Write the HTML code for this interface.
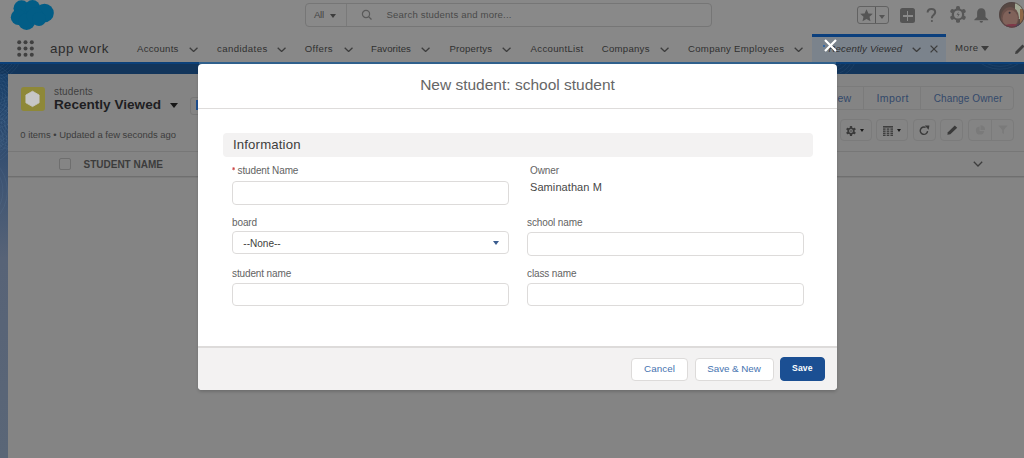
<!DOCTYPE html>
<html><head><meta charset="utf-8">
<style>
*{box-sizing:border-box;margin:0;padding:0}
html,body{width:1024px;height:458px;overflow:hidden}
body{position:relative;background:#848484;font-family:"Liberation Sans",sans-serif;color:#333}
.a{position:absolute;white-space:nowrap}
#hdr{left:0;top:0;width:1024px;height:62px;background:#888888}
#line{left:0;top:62px;width:1024px;height:2px;background:#0b4079}
#band{left:0;top:64px;width:1024px;height:10px;background:#12355b}
#strip{left:0;top:74px;width:8px;height:384px;background:linear-gradient(#163a62,#4a5b72 40%,#5a6676)}
#card{left:8px;top:74px;width:1030px;height:400px;background:#848484;border-radius:4px}
.nav{top:43px;font-size:9.6px;color:#303030}
.chev{position:absolute;top:46.6px;width:9.2px;height:5.4px;fill:none;stroke:#3d3d3d;stroke-width:1.3}
#modal{left:198px;top:64px;width:639px;height:326px;background:#fff;border-radius:4px;box-shadow:0 2px 3px rgba(0,0,0,.16);overflow:hidden}
#mhead{left:0;top:0;width:639px;height:44.8px;border-bottom:1.8px solid #dedcdb}
#mtitle{left:0;top:12.4px;width:639px;text-align:center;font-size:15.5px;color:#666;letter-spacing:0}
#sect{left:25px;top:69px;width:590px;height:24px;background:#f3f2f2;border-radius:4px}
.lbl{font-size:10px;letter-spacing:-.12px;color:#636363}
.inp{position:absolute;height:24px;border:1px solid #dddbda;border-radius:4px;background:#fff}
#mfoot{left:0;top:282px;width:639px;height:44px;background:#f3f2f2;border-top:2px solid #dddbda}
.btn{position:absolute;height:23.4px;border:1px solid #dddbda;border-radius:4px;background:#fff;font-size:9.8px;letter-spacing:.1px;color:#4673b0;text-align:center;line-height:20.6px}
</style></head><body>
<div class="a" id="hdr"></div>
<div class="a" id="line"></div>
<svg class="a" style="left:0;top:64px" width="1024" height="394" viewBox="0 64 1024 394"><defs><linearGradient id="sg" x1="0" y1="0" x2="0" y2="1"><stop offset="0" stop-color="#173e68"/><stop offset=".25" stop-color="#3a5272"/><stop offset=".48" stop-color="#576377"/><stop offset="1" stop-color="#5a6677"/></linearGradient><clipPath id="bc"><rect x="0" y="64" width="1024" height="10"/><rect x="0" y="64" width="8" height="394"/></clipPath><clipPath id="bc2"><rect x="0" y="64" width="1024" height="10"/><rect x="0" y="64" width="8" height="150"/></clipPath></defs><g clip-path="url(#bc)"><rect x="0" y="64" width="1024" height="394" fill="#12355b"/><rect x="0" y="74" width="8" height="384" fill="url(#sg)"/><g clip-path="url(#bc2)" fill="none" stroke="#7597bb" stroke-opacity=".2" stroke-width=".6"><circle cx="-8" cy="50" r="10.0"/><circle cx="-8" cy="50" r="12.9"/><circle cx="-8" cy="50" r="15.7"/><circle cx="-8" cy="50" r="18.6"/><circle cx="-8" cy="50" r="21.5"/><circle cx="-8" cy="50" r="24.4"/><circle cx="-8" cy="50" r="27.2"/><circle cx="-8" cy="50" r="30.1"/><circle cx="14" cy="123" r="3.9"/><circle cx="14" cy="123" r="6.8"/><circle cx="14" cy="123" r="9.7"/><circle cx="14" cy="123" r="12.5"/><circle cx="14" cy="123" r="15.4"/><circle cx="14" cy="123" r="18.3"/><circle cx="14" cy="123" r="21.2"/><circle cx="14" cy="123" r="24.0"/><circle cx="14" cy="123" r="26.9"/><circle cx="68" cy="123" r="9.9"/><circle cx="68" cy="123" r="12.5"/><circle cx="68" cy="123" r="15.1"/><circle cx="68" cy="123" r="17.7"/><circle cx="68" cy="123" r="20.3"/><circle cx="68" cy="123" r="22.9"/><circle cx="114" cy="25" r="10.0"/><circle cx="114" cy="25" r="13.9"/><circle cx="114" cy="25" r="17.8"/><circle cx="114" cy="25" r="21.8"/><circle cx="114" cy="25" r="25.7"/><circle cx="114" cy="25" r="29.7"/><circle cx="143" cy="33" r="11.5"/><circle cx="143" cy="33" r="15.0"/><circle cx="143" cy="33" r="18.5"/><circle cx="143" cy="33" r="22.1"/><circle cx="143" cy="33" r="25.6"/><circle cx="143" cy="33" r="29.1"/><circle cx="211" cy="32" r="5.4"/><circle cx="211" cy="32" r="8.4"/><circle cx="211" cy="32" r="11.4"/><circle cx="211" cy="32" r="14.4"/><circle cx="211" cy="32" r="17.4"/><circle cx="211" cy="32" r="20.4"/><circle cx="255" cy="44" r="6.2"/><circle cx="255" cy="44" r="9.2"/><circle cx="255" cy="44" r="12.1"/><circle cx="255" cy="44" r="15.1"/><circle cx="255" cy="44" r="18.0"/><circle cx="255" cy="44" r="21.0"/><circle cx="255" cy="44" r="24.0"/><circle cx="295" cy="89" r="11.5"/><circle cx="295" cy="89" r="14.6"/><circle cx="295" cy="89" r="17.6"/><circle cx="295" cy="89" r="20.7"/><circle cx="295" cy="89" r="23.7"/><circle cx="342" cy="37" r="3.4"/><circle cx="342" cy="37" r="6.2"/><circle cx="342" cy="37" r="9.0"/><circle cx="342" cy="37" r="11.7"/><circle cx="342" cy="37" r="14.5"/><circle cx="342" cy="37" r="17.3"/><circle cx="342" cy="37" r="20.0"/><circle cx="342" cy="37" r="22.8"/><circle cx="389" cy="126" r="7.6"/><circle cx="389" cy="126" r="11.5"/><circle cx="389" cy="126" r="15.3"/><circle cx="389" cy="126" r="19.1"/><circle cx="389" cy="126" r="23.0"/><circle cx="389" cy="126" r="26.8"/><circle cx="389" cy="126" r="30.6"/><circle cx="431" cy="119" r="3.3"/><circle cx="431" cy="119" r="7.2"/><circle cx="431" cy="119" r="11.2"/><circle cx="431" cy="119" r="15.1"/><circle cx="431" cy="119" r="19.0"/><circle cx="431" cy="119" r="22.9"/><circle cx="431" cy="119" r="26.8"/><circle cx="461" cy="126" r="11.3"/><circle cx="461" cy="126" r="14.6"/><circle cx="461" cy="126" r="18.0"/><circle cx="461" cy="126" r="21.3"/><circle cx="461" cy="126" r="24.6"/><circle cx="461" cy="126" r="27.9"/><circle cx="461" cy="126" r="31.2"/><circle cx="498" cy="27" r="12.0"/><circle cx="498" cy="27" r="14.7"/><circle cx="498" cy="27" r="17.5"/><circle cx="498" cy="27" r="20.2"/><circle cx="498" cy="27" r="22.9"/><circle cx="498" cy="27" r="25.7"/><circle cx="498" cy="27" r="28.4"/><circle cx="542" cy="41" r="6.1"/><circle cx="542" cy="41" r="9.0"/><circle cx="542" cy="41" r="11.8"/><circle cx="542" cy="41" r="14.7"/><circle cx="542" cy="41" r="17.6"/><circle cx="542" cy="41" r="20.5"/><circle cx="542" cy="41" r="23.3"/><circle cx="542" cy="41" r="26.2"/><circle cx="542" cy="41" r="29.1"/><circle cx="572" cy="112" r="10.5"/><circle cx="572" cy="112" r="13.2"/><circle cx="572" cy="112" r="15.9"/><circle cx="572" cy="112" r="18.6"/><circle cx="572" cy="112" r="21.3"/><circle cx="572" cy="112" r="24.0"/><circle cx="572" cy="112" r="26.7"/><circle cx="636" cy="45" r="6.9"/><circle cx="636" cy="45" r="9.6"/><circle cx="636" cy="45" r="12.4"/><circle cx="636" cy="45" r="15.1"/><circle cx="636" cy="45" r="17.8"/><circle cx="636" cy="45" r="20.5"/><circle cx="674" cy="38" r="7.1"/><circle cx="674" cy="38" r="10.3"/><circle cx="674" cy="38" r="13.5"/><circle cx="674" cy="38" r="16.8"/><circle cx="674" cy="38" r="20.0"/><circle cx="674" cy="38" r="23.2"/><circle cx="674" cy="38" r="26.5"/><circle cx="674" cy="38" r="29.7"/><circle cx="674" cy="38" r="32.9"/><circle cx="726" cy="32" r="6.4"/><circle cx="726" cy="32" r="10.4"/><circle cx="726" cy="32" r="14.4"/><circle cx="726" cy="32" r="18.3"/><circle cx="726" cy="32" r="22.3"/><circle cx="783" cy="40" r="5.5"/><circle cx="783" cy="40" r="9.1"/><circle cx="783" cy="40" r="12.8"/><circle cx="783" cy="40" r="16.5"/><circle cx="783" cy="40" r="20.1"/><circle cx="783" cy="40" r="23.8"/><circle cx="783" cy="40" r="27.5"/><circle cx="783" cy="40" r="31.2"/><circle cx="830" cy="51" r="6.3"/><circle cx="830" cy="51" r="9.8"/><circle cx="830" cy="51" r="13.4"/><circle cx="830" cy="51" r="16.9"/><circle cx="830" cy="51" r="20.5"/><circle cx="830" cy="51" r="24.1"/><circle cx="830" cy="51" r="27.6"/><circle cx="869" cy="115" r="8.8"/><circle cx="869" cy="115" r="12.2"/><circle cx="869" cy="115" r="15.6"/><circle cx="869" cy="115" r="19.0"/><circle cx="869" cy="115" r="22.3"/><circle cx="869" cy="115" r="25.7"/><circle cx="869" cy="115" r="29.1"/><circle cx="901" cy="114" r="10.4"/><circle cx="901" cy="114" r="13.8"/><circle cx="901" cy="114" r="17.3"/><circle cx="901" cy="114" r="20.8"/><circle cx="901" cy="114" r="24.2"/><circle cx="901" cy="114" r="27.7"/><circle cx="901" cy="114" r="31.2"/><circle cx="947" cy="117" r="11.3"/><circle cx="947" cy="117" r="14.1"/><circle cx="947" cy="117" r="16.8"/><circle cx="947" cy="117" r="19.6"/><circle cx="947" cy="117" r="22.3"/><circle cx="947" cy="117" r="25.1"/><circle cx="947" cy="117" r="27.9"/><circle cx="1000" cy="35" r="11.8"/><circle cx="1000" cy="35" r="14.6"/><circle cx="1000" cy="35" r="17.4"/><circle cx="1000" cy="35" r="20.2"/><circle cx="1000" cy="35" r="23.0"/><circle cx="1000" cy="35" r="25.8"/><circle cx="1000" cy="35" r="28.6"/><circle cx="1000" cy="35" r="31.4"/><circle cx="1000" cy="35" r="34.2"/><circle cx="-6" cy="127" r="11.9"/><circle cx="-6" cy="127" r="15.9"/><circle cx="-6" cy="127" r="19.8"/><circle cx="-6" cy="127" r="23.8"/><circle cx="-33" cy="191" r="9.7"/><circle cx="-33" cy="191" r="14.1"/><circle cx="-33" cy="191" r="18.4"/><circle cx="-33" cy="191" r="22.8"/><circle cx="-33" cy="191" r="27.2"/><circle cx="-33" cy="191" r="31.5"/><circle cx="-33" cy="191" r="35.9"/><circle cx="-33" cy="191" r="40.3"/><circle cx="-28" cy="162" r="11.9"/><circle cx="-28" cy="162" r="14.5"/><circle cx="-28" cy="162" r="17.0"/><circle cx="-28" cy="162" r="19.6"/><circle cx="-28" cy="162" r="22.1"/><circle cx="-28" cy="162" r="24.7"/><circle cx="-34" cy="147" r="6.4"/><circle cx="-34" cy="147" r="10.3"/><circle cx="-34" cy="147" r="14.2"/><circle cx="-34" cy="147" r="18.0"/><circle cx="-34" cy="147" r="21.9"/><circle cx="-15" cy="95" r="14.8"/><circle cx="-15" cy="95" r="17.6"/><circle cx="-15" cy="95" r="20.4"/><circle cx="-15" cy="95" r="23.3"/><circle cx="-15" cy="95" r="26.1"/><circle cx="-15" cy="95" r="28.9"/><circle cx="-15" cy="95" r="31.8"/><circle cx="-4" cy="104" r="9.3"/><circle cx="-4" cy="104" r="12.9"/><circle cx="-4" cy="104" r="16.5"/><circle cx="-4" cy="104" r="20.1"/><circle cx="-4" cy="104" r="23.7"/><circle cx="-23" cy="136" r="4.8"/><circle cx="-23" cy="136" r="7.7"/><circle cx="-23" cy="136" r="10.6"/><circle cx="-23" cy="136" r="13.5"/><circle cx="-23" cy="136" r="16.4"/><circle cx="-23" cy="136" r="19.3"/><circle cx="-23" cy="136" r="22.2"/><circle cx="-23" cy="136" r="25.2"/><circle cx="-11" cy="139" r="8.5"/><circle cx="-11" cy="139" r="11.5"/><circle cx="-11" cy="139" r="14.6"/><circle cx="-11" cy="139" r="17.6"/><circle cx="-11" cy="139" r="20.7"/><circle cx="-11" cy="139" r="23.7"/></g></g></svg>
<div class="a" id="card"></div>

<!-- logo -->
<svg class="a" style="left:10px;top:0" width="45" height="31" viewBox="0 0 45 31">
<g fill="#025d86"><circle cx="11.5" cy="8.3" r="8"/><circle cx="22.5" cy="7.6" r="7.5"/><circle cx="34.5" cy="13" r="9.3"/><circle cx="8.6" cy="17.3" r="7.8"/><circle cx="16.6" cy="21.6" r="8.4"/><circle cx="25" cy="16" r="8.5"/><circle cx="29" cy="19" r="7"/></g></svg>
<!-- search -->
<div class="a" style="left:304.5px;top:3px;width:407.6px;height:23.6px;border:1px solid #767676;border-radius:4px;background:#898989"></div>
<div class="a" style="left:346px;top:4px;width:1px;height:22px;background:#7a7a7a"></div>
<div class="a" style="left:314px;top:9.2px;font-size:9.6px;letter-spacing:-.3px;color:#444">All</div>
<div class="a" style="left:330.2px;top:13.6px;width:0;height:0;border-left:3.6px solid transparent;border-right:3.6px solid transparent;border-top:4.2px solid #3d3d3d"></div>
<svg class="a" style="left:361px;top:8.8px" width="12" height="12" viewBox="0 0 12 12"><circle cx="5" cy="5" r="3.6" fill="none" stroke="#5a5a5a" stroke-width="1.2"/><line x1="7.6" y1="7.6" x2="10.5" y2="10.5" stroke="#5a5a5a" stroke-width="1.3"/></svg>
<div class="a" style="left:386.5px;top:8.7px;font-size:9.6px;letter-spacing:.17px;color:#4a4a4a">Search students and more...</div>

<!-- right icons -->
<div class="a" style="left:857.2px;top:6.1px;width:32.3px;height:18.1px;border:1.2px solid #626262;border-radius:3px"></div>
<div class="a" style="left:874.8px;top:7px;width:1.6px;height:16.4px;background:#585858"></div>
<svg class="a" style="left:860px;top:8.5px" width="13" height="13" viewBox="0 0 13 13"><path d="M6.5 0.3l1.9 4.1 4.4.4-3.3 3 1 4.4-4-2.3-4 2.3 1-4.4-3.3-3 4.4-.4z" fill="#555"/></svg>
<div class="a" style="left:879.2px;top:14.5px;width:0;height:0;border-left:3.2px solid transparent;border-right:3.2px solid transparent;border-top:4.1px solid #555"></div>
<div class="a" style="left:900.3px;top:8.25px;width:14.7px;height:15px;background:#545454;border-radius:2.5px"></div>
<div class="a" style="left:906.9px;top:10.8px;width:1.6px;height:10px;background:#8a8a8a"></div>
<div class="a" style="left:902.7px;top:15px;width:10px;height:1.6px;background:#8a8a8a"></div>
<svg class="a" style="left:926px;top:8px" width="11" height="15" viewBox="0 0 11 15"><path d="M1.6 4.4C1.6 2.2 3.2 1 5.3 1S9.2 2.3 9.2 4.3c0 2.4-3.3 2.8-3.3 5.4v.6" fill="none" stroke="#555" stroke-width="2"/><circle cx="5.9" cy="13" r="1.05" fill="#555"/></svg>
<svg class="a" style="left:949.8px;top:5.9px" width="17" height="17" viewBox="0 0 17 17"><g fill="#585858"><circle cx="8" cy="8.4" r="6.2"/><rect x="6" y="0" width="4" height="16.8" rx="1.6"/><rect x="6" y="0" width="4" height="16.8" rx="1.6" transform="rotate(60 8 8.4)"/><rect x="6" y="0" width="4" height="16.8" rx="1.6" transform="rotate(120 8 8.4)"/></g><circle cx="8" cy="8.4" r="4" fill="#8a8a8a"/><path d="M8.8 5.6L6.6 8.8h1.7l-1 2.6 2.4-3.4H8z" fill="#585858"/></svg>
<svg class="a" style="left:973.5px;top:7.6px" width="15" height="15" viewBox="0 0 15 15"><path d="M7.3 0.3c2.6 0 4.2 1.9 4.2 4.6v4l2.7 2.6v.8H0.4v-.8l2.7-2.6v-4C3.1 2.2 4.7 0.3 7.3 0.3z" fill="#555"/><path d="M5.6 13h3.4a1.7 1.7 0 0 1-3.4 0z" fill="#555"/></svg>
<svg class="a" style="left:998.8px;top:2.3px" width="26" height="26" viewBox="0 0 26 26"><defs><clipPath id="av"><circle cx="12.8" cy="12.8" r="12.7"/></clipPath></defs><g clip-path="url(#av)"><rect width="26" height="26" fill="#574843"/><rect x="16" y="0" width="10" height="17" fill="#a2a894"/><rect x="21" y="7" width="5" height="14" fill="#8e6646"/><ellipse cx="11" cy="15.5" rx="9" ry="10.5" fill="#6a504a"/><ellipse cx="11.2" cy="16.5" rx="7.6" ry="8.4" fill="#80625a"/><ellipse cx="14" cy="26.5" rx="12" ry="4.5" fill="#7e3848"/><ellipse cx="21" cy="25" rx="4" ry="3" fill="#3e4a6e"/><circle cx="10.6" cy="10.8" r="1" fill="#2e2e3a"/></g><circle cx="12.8" cy="12.8" r="12.3" fill="none" stroke="#4e4444" stroke-width=".8"/></svg>

<!-- nav -->
<div class="a" style="left:17px;top:40px;width:17px;height:17px">
<svg width="17" height="17" viewBox="0 0 17 17"><g fill="#404040"><circle cx="2.2" cy="2.2" r="2"/><circle cx="8.5" cy="2.2" r="2"/><circle cx="14.8" cy="2.2" r="2"/><circle cx="2.2" cy="8.5" r="2"/><circle cx="8.5" cy="8.5" r="2"/><circle cx="14.8" cy="8.5" r="2"/><circle cx="2.2" cy="14.8" r="2"/><circle cx="8.5" cy="14.8" r="2"/><circle cx="14.8" cy="14.8" r="2"/></g></svg></div>
<div class="a" style="left:50px;top:41px;font-size:13.4px;letter-spacing:0.6px;color:#2c2c2c">app work</div>
<div class="a nav" style="left:137px;letter-spacing:.28px">Accounts</div><svg class="chev" style="left:188.5px"><polyline points="0.7,0.7 4.6,4.5 8.5,0.7"/></svg>
<div class="a nav" style="left:217px;letter-spacing:.43px">candidates</div><svg class="chev" style="left:276.5px"><polyline points="0.7,0.7 4.6,4.5 8.5,0.7"/></svg>
<div class="a nav" style="left:304.7px;letter-spacing:.4px">Offers</div><svg class="chev" style="left:343.5px"><polyline points="0.7,0.7 4.6,4.5 8.5,0.7"/></svg>
<div class="a nav" style="left:371px;letter-spacing:.05px">Favorites</div><svg class="chev" style="left:421px"><polyline points="0.7,0.7 4.6,4.5 8.5,0.7"/></svg>
<div class="a nav" style="left:449.4px;letter-spacing:.21px">Propertys</div><svg class="chev" style="left:501.8px"><polyline points="0.7,0.7 4.6,4.5 8.5,0.7"/></svg>
<div class="a nav" style="left:530.6px;letter-spacing:.31px">AccountList</div>
<div class="a nav" style="left:601.8px;letter-spacing:.26px">Companys</div><svg class="chev" style="left:660px"><polyline points="0.7,0.7 4.6,4.5 8.5,0.7"/></svg>
<div class="a nav" style="left:688px;letter-spacing:.3px">Company Employees</div><svg class="chev" style="left:793.8px"><polyline points="0.7,0.7 4.6,4.5 8.5,0.7"/></svg>
<div class="a" style="left:812px;top:34px;width:134px;height:28px;background:#7b838c"></div>
<div class="a" style="left:812px;top:33.9px;width:134px;height:2.7px;background:#0b3f7d"></div>
<div class="a" style="left:823px;top:45px;width:2px;height:2px;background:#1f5ea8;border-radius:1px"></div>
<div class="a nav" style="left:828.4px;font-style:italic;letter-spacing:.17px;color:#2e2e2e">Recently Viewed</div>
<svg class="chev" style="left:911.6px"><polyline points="0.7,0.7 4.6,4.5 8.5,0.7"/></svg>
<svg class="a" style="left:929.5px;top:44.8px" width="8" height="8" viewBox="0 0 8 8"><path d="M.6 .6L7.4 7.4M7.4 .6L.6 7.4" stroke="#3d3d3d" stroke-width="1.3"/></svg>
<div class="a nav" style="left:955px;top:42.4px;letter-spacing:.4px">More</div>
<div class="a" style="left:980.5px;top:45.5px;width:0;height:0;border-left:4px solid transparent;border-right:4px solid transparent;border-top:5px solid #3d3d3d"></div>
<svg class="a" style="left:1013.5px;top:43px" width="12" height="12" viewBox="0 0 12 12"><path d="M1 11l.6-2.6L8.5 1.5l2 2-6.9 6.9z" fill="#3f3f3f"/></svg>

<!-- list view header -->
<div class="a" style="left:20.7px;top:86.6px;width:24.3px;height:24.3px;background:#8e8838;border-radius:3px"></div>
<svg class="a" style="left:24.3px;top:90px" width="17" height="18" viewBox="0 0 17 18"><path d="M8.5 1.2l6.6 3.8v7.8L8.5 16.6 1.9 12.8V5z" fill="#c6c6c6" stroke="#c6c6c6" stroke-width="0.8" stroke-linejoin="round"/></svg>
<div class="a" style="left:54px;top:86.2px;font-size:10px;letter-spacing:.15px;color:#404040">students</div>
<div class="a" style="left:54px;top:96.7px;font-size:13.6px;font-weight:bold;color:#1e1e22">Recently Viewed</div>
<div class="a" style="left:169.6px;top:102.5px;width:0;height:0;border-left:4.5px solid transparent;border-right:4.5px solid transparent;border-top:5.5px solid #161616"></div>
<div class="a" style="left:189.7px;top:96.6px;width:14px;height:18px;border:1px solid #777;border-radius:3px"></div><div class="a" style="left:196px;top:100px;width:2px;height:10px;background:#1d4f8f"></div>
<div class="a" style="left:20.3px;top:129.4px;font-size:9.44px;color:#3c3c3c">0 items • Updated a few seconds ago</div>
<div class="a" style="left:8px;top:151px;width:1020px;height:1px;background:#777"></div>
<div class="a" style="left:8px;top:176px;width:1020px;height:1px;background:#6f6f6f"></div><div class="a" style="left:8px;top:177px;width:1020px;height:1px;background:#7b7b7b"></div>
<div class="a" style="left:59px;top:158px;width:12px;height:12px;border:1px solid #6e6e6e;border-radius:2px;background:#858585"></div>
<div class="a" style="left:83.5px;top:159px;font-size:10px;font-weight:bold;color:#3c3c3c;letter-spacing:0">STUDENT NAME</div>
<svg class="chev" style="left:972.8px;top:161px;width:10px;height:6px"><polyline points="0.8,0.8 5,5 9.2,0.8"/></svg>

<!-- list view buttons -->
<div class="a" style="left:800px;top:86.4px;width:214px;height:24px;border:1px solid #7b7b7b;border-radius:4px"></div>
<div class="a" style="left:863px;top:87.4px;width:1px;height:22px;background:#7b7b7b"></div>
<div class="a" style="left:920.2px;top:87.4px;width:1px;height:22px;background:#7b7b7b"></div>
<div class="a" style="left:829.5px;top:92.2px;font-size:10.6px;letter-spacing:.25px;color:#33496b">New</div>
<div class="a" style="left:876.4px;top:92.2px;font-size:10.6px;letter-spacing:.4px;color:#33496b">Import</div>
<div class="a" style="left:933.7px;top:93px;font-size:10px;letter-spacing:.12px;color:#33496b">Change Owner</div>
<div class="a" style="left:839.8px;top:119px;width:32.5px;height:22px;border:1px solid #7b7b7b;border-radius:4px"></div>
<div class="a" style="left:876.3px;top:119px;width:32px;height:22px;border:1px solid #7b7b7b;border-radius:4px"></div>
<div class="a" style="left:912.5px;top:119px;width:23.5px;height:22px;border:1px solid #7b7b7b;border-radius:4px"></div>
<div class="a" style="left:940.4px;top:119px;width:22.6px;height:22px;border:1px solid #7b7b7b;border-radius:4px"></div>
<div class="a" style="left:968px;top:119px;width:46px;height:22px;border:1px solid #7b7b7b;border-radius:4px"></div>
<div class="a" style="left:990.9px;top:119.5px;width:1px;height:21px;background:#7b7b7b"></div>
<svg class="a" style="left:846.3px;top:125.5px" width="10" height="10" viewBox="0 0 10 10"><g fill="#3a3a3a"><circle cx="5" cy="5" r="3.6"/><rect x="3.9" y="0" width="2.2" height="10" rx=".5"/><rect x="3.9" y="0" width="2.2" height="10" rx=".5" transform="rotate(60 5 5)"/><rect x="3.9" y="0" width="2.2" height="10" rx=".5" transform="rotate(120 5 5)"/></g><circle cx="5" cy="5" r="1.9" fill="#858585"/><circle cx="5" cy="5" r=".8" fill="#3a3a3a"/></svg>
<div class="a" style="left:860.4px;top:129px;border-left:2.4px solid transparent;border-right:2.4px solid transparent;border-top:3px solid #1a1a1a"></div>
<svg class="a" style="left:882.9px;top:125.5px" width="10" height="10" viewBox="0 0 10 10"><g fill="#3f3f3f"><rect x="0" y="0" width="10" height="1.6"/><rect x="0" y="2.4" width="2.6" height="1.4"/><rect x="3.7" y="2.4" width="2.6" height="1.4"/><rect x="7.4" y="2.4" width="2.6" height="1.4"/><rect x="0" y="4.5" width="2.6" height="1.4"/><rect x="3.7" y="4.5" width="2.6" height="1.4"/><rect x="7.4" y="4.5" width="2.6" height="1.4"/><rect x="0" y="6.6" width="2.6" height="1.4"/><rect x="3.7" y="6.6" width="2.6" height="1.4"/><rect x="7.4" y="6.6" width="2.6" height="1.4"/><rect x="0" y="8.6" width="2.6" height="1.4"/><rect x="3.7" y="8.6" width="2.6" height="1.4"/><rect x="7.4" y="8.6" width="2.6" height="1.4"/></g></svg>
<div class="a" style="left:897px;top:129px;border-left:2.4px solid transparent;border-right:2.4px solid transparent;border-top:3px solid #1a1a1a"></div>
<svg class="a" style="left:919px;top:124.5px" width="11" height="11" viewBox="0 0 11 11"><path d="M8.6 6.2A3.7 3.7 0 1 1 6.6 2.4" fill="none" stroke="#3a3a3a" stroke-width="1.4"/><path d="M5.8 0.6L10.4 0.4 9.6 4.8z" fill="#3a3a3a"/></svg>
<svg class="a" style="left:946.5px;top:124.8px" width="11" height="10" viewBox="0 0 11 10"><path d="M0.3 9.7l.6-2.5L7.8 0.6l2.4 2.2-6.9 6.4z" fill="#3a3a3a"/></svg>
<svg class="a" style="left:974.5px;top:124.7px" width="10.5" height="10.5" viewBox="0 0 12 12"><path d="M5.2 1.6A4.7 4.7 0 1 0 10.4 6.8H5.2z" fill="#7a7a7a"/><path d="M6.3 0.3v5.3h5.4A5.4 5.4 0 0 0 6.3 0.3z" fill="#7a7a7a"/></svg>
<svg class="a" style="left:997.8px;top:125px" width="10" height="9.5" viewBox="0 0 12 12"><path d="M0.3 0.5h11.4L7 6.2V11.5L5 10.2V6.2z" fill="#7a7a7a"/></svg>

<!-- close X -->
<svg class="a" style="left:823px;top:38px" width="15" height="15" viewBox="0 0 15 15"><path d="M2 2L13 13M13 2L2 13" stroke="#fff" stroke-width="2.2"/></svg>

<!-- modal -->
<div class="a" id="modal">
  <div class="a" id="mhead"></div>
  <div class="a" id="mtitle">New student: school student</div>
  <div class="a" id="sect"></div>
  <div class="a" style="left:35px;top:73.4px;font-size:13.2px;letter-spacing:.15px;color:#3e3e3c">Information</div>

  <svg class="a" style="left:34.2px;top:103.3px" width="3.2" height="3.4" viewBox="0 0 4 4"><g stroke="#c8393a" stroke-width=".9"><line x1="2" y1="0" x2="2" y2="4"/><line x1=".2" y1="1" x2="3.8" y2="3"/><line x1=".2" y1="3" x2="3.8" y2="1"/></g></svg>
  <div class="a lbl" style="left:39.5px;top:101px">student Name</div>
  <div class="inp" style="left:34px;top:117px;width:277px"></div>

  <div class="a lbl" style="left:332px;top:101px">Owner</div>
  <div class="a" style="left:332px;top:117px;font-size:11px;letter-spacing:.08px;color:#474747">Saminathan M</div>

  <div class="a lbl" style="left:34px;top:152.5px">board</div>
  <div class="inp" style="left:34px;top:167.4px;width:277px;height:23px"></div>
  <div class="a" style="left:45.3px;top:174px;font-size:10.05px;color:#3e3e3c">--None--</div>
  <div class="a" style="left:295px;top:177px;border-left:3px solid transparent;border-right:3px solid transparent;border-top:4px solid #3a5c8e"></div>

  <div class="a lbl" style="left:329px;top:152.5px">school name</div>
  <div class="inp" style="left:329px;top:168px;width:277px"></div>

  <div class="a lbl" style="left:34px;top:203.5px">student name</div>
  <div class="inp" style="left:34px;top:218.5px;width:277px;height:23.5px"></div>

  <div class="a lbl" style="left:329px;top:203.5px">class name</div>
  <div class="inp" style="left:329px;top:218.5px;width:277px;height:23.5px"></div>

  <div class="a" id="mfoot"></div>
  <div class="btn" style="left:433.4px;top:293.6px;width:56.3px">Cancel</div>
  <div class="btn" style="left:496.5px;top:293.6px;width:79px;letter-spacing:-.05px">Save &amp; New</div>
  <div class="btn" style="left:582px;top:292.8px;width:44.7px;height:24.2px;background:#1b4f93;border-color:#1b4f93;color:#fff;font-weight:bold;font-size:8.6px;line-height:21.6px">Save</div>
</div>
<div class="a" style="left:199px;top:62px;width:637px;height:2px;background:#30608c"></div>
</body></html>
